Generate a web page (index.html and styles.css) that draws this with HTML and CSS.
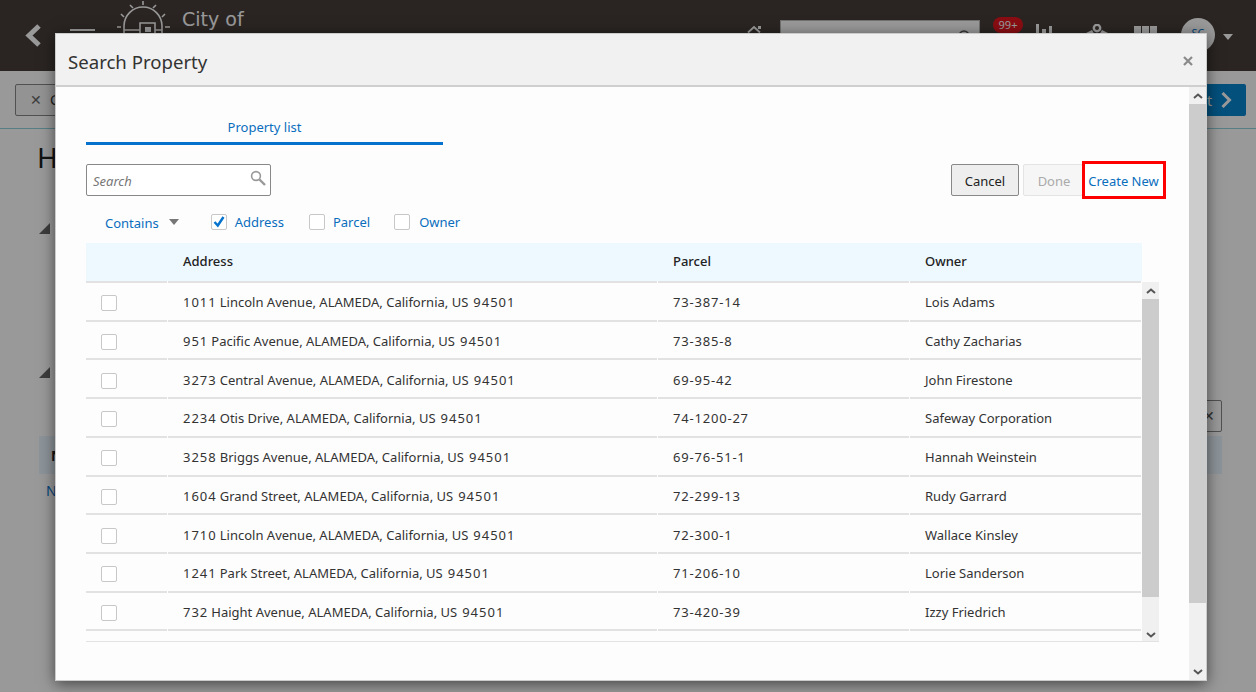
FILE: index.html
```html
<!DOCTYPE html>
<html lang="en">
<head>
<meta charset="utf-8">
<title>Search Property</title>
<link rel="stylesheet" href="styles.css">
</head>
<body>
<div class="page">
  <header class="topbar">
    <svg class="back" viewBox="0 0 18 24" width="18" height="24"><path d="M15 2 5 11.500l10 9.500" fill="none" stroke="#fff" stroke-width="5"/></svg>
    <div class="burger"></div>
    <svg class="logo" viewBox="0 0 56 40" width="56" height="40"><g fill="none" stroke="#fff" stroke-width="1.6"><path d="M8 36V26a19 19 0 0 1 38 0v10"/><path d="M27 1v4M14 5l3 3M40 5l-3 3M5 14l3 3M49 14l-3 3M1 27h4M49 27h5"/><path d="M8 30h16M39 30h7M24 33V23h15v10"/></g><rect x="29" y="27" width="6" height="5" fill="#fff"/></svg>
    <div class="cityname">City of</div>
    <div class="spacer"></div>
    <svg class="homeicon" viewBox="0 0 16 10" width="16" height="10"><path d="M1 7.500 7 2l6 5.500M3 8v2" fill="none" stroke="#fff" stroke-width="1.800"/><rect x="11" y="1" width="3" height="3" fill="#fff"/></svg>
    <div class="globalsearch"><svg viewBox="0 0 14 14" width="14" height="14"><circle cx="7" cy="7" r="5" fill="none" stroke="#555" stroke-width="1.500"/></svg></div>
    <div class="badge">99+</div>
    <svg class="chart" viewBox="0 0 16 20" width="16" height="20"><path d="M0 0h3v20H0zM6 5h4v15H6zM13 2h3v18h-3z" fill="#fff"/></svg>
    <svg class="people" viewBox="0 0 22 20" width="22" height="20"><circle cx="11" cy="4" r="3.200" fill="none" stroke="#fff" stroke-width="2.400"/><path d="M0 9 6 6l3 5h4l3-5 6 3v11H0z" fill="#fff"/></svg>
    <div class="apps"><i></i><i></i><i></i></div>
    <div class="avatar">SC</div>
    <div class="avatarcaret"></div>
  </header>
  <div class="trainbar">
    <div class="exitbtn"><span class="x">✕</span>Cancel</div>
    <div class="nextbtn">Next<svg viewBox="0 0 12 16" width="12" height="16"><path d="M2.500 1 9.500 8l-7 7" fill="none" stroke="#fff" stroke-width="3"/></svg></div>
  </div>
  <main class="content">
    <h1 class="pagehead">Home</h1>
    <div class="tri tri-one"></div>
    <div class="tri tri-two"></div>
    <div class="closechip">✕</div>
    <div class="bgheader"><b>Name</b></div>
    <div class="bglink">No data</div>
  </main>
</div>
<div class="scrim"></div>

<section class="dialog">
  <div class="dialog-head">
    <h2 class="dialog-title">Search Property</h2>
    <svg class="dialog-close" viewBox="0 0 10 10" width="10" height="10"><path d="M1 1l8 8M9 1 1 9" stroke="#8a8a8a" stroke-width="2.200"/></svg>
  </div>
  <div class="dialog-main">
    <div class="dialog-body">
      <div class="tab">Property list</div>
      <div class="tools">
        <div class="searchbox">
          <span>Search</span>
          <svg viewBox="0 0 16 16" width="16" height="16"><circle cx="6" cy="6" r="4.400" fill="none" stroke="#999" stroke-width="1.600"/><path d="M9.500 9.500 15 15" stroke="#999" stroke-width="2.400"/></svg>
        </div>
        <div class="actions">
          <button class="btn btn-cancel">Cancel</button>
          <button class="btn btn-done">Done</button>
          <a class="createnew">Create New</a>
        </div>
      </div>
      <div class="filters">
        <span class="contains">Contains</span><span class="caret"></span>
        <label class="opt opt-address"><span class="cb cb-on"><svg viewBox="0 0 16 16" width="16" height="16"><path d="M3.500 8 6.800 11.500 12.500 3" fill="none" stroke="#0572ce" stroke-width="2.400"/></svg></span>Address</label>
        <label class="opt opt-parcel"><span class="cb"></span>Parcel</label>
        <label class="opt opt-owner"><span class="cb"></span>Owner</label>
      </div>
      <div class="thead row">
        <div></div><div>Address</div><div>Parcel</div><div>Owner</div>
      </div>
      <div class="tablewrap">
        <div class="tbody">
          <div class="row"><div class="check"><span class="cb"></span></div><div><span class="n">1011</span> Lincoln Avenue, ALAMEDA, California, US <span class="n">94501</span></div><div class="parcel">73-387-14</div><div>Lois Adams</div></div>
          <div class="row"><div class="check"><span class="cb"></span></div><div><span class="n">951</span> Pacific Avenue, ALAMEDA, California, US <span class="n">94501</span></div><div class="parcel">73-385-8</div><div>Cathy Zacharias</div></div>
          <div class="row"><div class="check"><span class="cb"></span></div><div><span class="n">3273</span> Central Avenue, ALAMEDA, California, US <span class="n">94501</span></div><div class="parcel">69-95-42</div><div>John Firestone</div></div>
          <div class="row"><div class="check"><span class="cb"></span></div><div><span class="n">2234</span> Otis Drive, ALAMEDA, California, US <span class="n">94501</span></div><div class="parcel">74-1200-27</div><div>Safeway Corporation</div></div>
          <div class="row"><div class="check"><span class="cb"></span></div><div><span class="n">3258</span> Briggs Avenue, ALAMEDA, California, US <span class="n">94501</span></div><div class="parcel">69-76-51-1</div><div>Hannah Weinstein</div></div>
          <div class="row"><div class="check"><span class="cb"></span></div><div><span class="n">1604</span> Grand Street, ALAMEDA, California, US <span class="n">94501</span></div><div class="parcel">72-299-13</div><div>Rudy Garrard</div></div>
          <div class="row"><div class="check"><span class="cb"></span></div><div><span class="n">1710</span> Lincoln Avenue, ALAMEDA, California, US <span class="n">94501</span></div><div class="parcel">72-300-1</div><div>Wallace Kinsley</div></div>
          <div class="row"><div class="check"><span class="cb"></span></div><div><span class="n">1241</span> Park Street, ALAMEDA, California, US <span class="n">94501</span></div><div class="parcel">71-206-10</div><div>Lorie Sanderson</div></div>
          <div class="row"><div class="check"><span class="cb"></span></div><div><span class="n">732</span> Haight Avenue, ALAMEDA, California, US <span class="n">94501</span></div><div class="parcel">73-420-39</div><div>Izzy Friedrich</div></div>
        </div>
        <div class="sbar sbar-inner">
          <div class="sb-btn"><svg viewBox="0 0 10 6" width="10" height="6"><path d="M1 5 5 1.500 9 5" fill="none" stroke="#555" stroke-width="2"/></svg></div>
          <div class="sb-thumb"></div>
          <div class="sb-rest"><svg viewBox="0 0 10 6" width="10" height="6"><path d="M1 1 5 4.500 9 1" fill="none" stroke="#555" stroke-width="2"/></svg></div>
        </div>
      </div>
    </div>
    <div class="sbar sbar-outer">
      <div class="sb-btn"><svg viewBox="0 0 10 6" width="10" height="6"><path d="M1 5 5 1.500 9 5" fill="none" stroke="#555" stroke-width="2"/></svg></div>
      <div class="sb-thumb"></div>
      <div class="sb-rest"><svg viewBox="0 0 10 6" width="10" height="6"><path d="M1 1 5 4.500 9 1" fill="none" stroke="#555" stroke-width="2"/></svg></div>
    </div>
  </div>
</section>
</body>
</html>
```
FILE: styles.css
```css
* { box-sizing: border-box; }
html, body { margin: 0; height: 100%; overflow: hidden; }
body { font-family: "Noto Sans", "Open Sans", sans-serif; font-size: 14px; color: #333; background: #fff; }

.page { height: 692px; display: flex; flex-direction: column; }
.topbar { height: 71px; flex: none; background: #463e39; display: flex; align-items: flex-start; color: #fff; overflow: hidden; }
.back { margin: 24px 0 0 24px; flex: none; }
.burger { width: 25px; height: 2px; background: #fff; margin: 29px 0 0 28px; flex: none; }
.logo { margin: 0 0 0 21px; flex: none; }
.cityname { font-family: "DejaVu Sans", sans-serif; font-size: 19px; line-height: 24px; margin: 7px 0 0 10px; }
.spacer { flex: 1; }
.homeicon { margin: 25px 0 0 0; flex: none; }
.globalsearch { width: 200px; height: 30px; background: #fff; border: 1px solid #bbb; margin: 20px 0 0 17px; display: flex; justify-content: flex-end; padding: 8px 8px 0 0; }
.badge { width: 30px; height: 16px; border-radius: 8px; background: #e4171f; font-size: 11px; line-height: 16px; text-align: center; margin: 17px 0 0 13px; }
.chart { margin: 24px 0 0 13px; flex: none; }
.people { margin: 24px 0 0 34px; flex: none; }
.apps { display: flex; gap: 1px; margin: 26px 0 0 26px; }
.apps i { width: 7px; height: 7px; background: #fff; }
.avatar { width: 34px; height: 34px; border-radius: 50%; background: #fff; color: #0572ce; font-size: 11px; text-align: center; line-height: 30px; margin: 18px 0 0 24px; }
.avatarcaret { width: 0; height: 0; border: 5px solid transparent; border-top: 6px solid #fff; border-bottom: 0; margin: 34px 23px 0 8px; }

.trainbar { height: 58px; flex: none; display: flex; justify-content: space-between; align-items: flex-start; padding: 13px 10px 0 15px; border-bottom: 1px solid #8fd2dc; }
.exitbtn { width: 110px; height: 32px; border: 1px solid #888; border-radius: 2px; background: #f5f5f5; line-height: 30px; padding-left: 14px; }
.x { color: #666; margin-right: 8px; }
.nextbtn { width: 90px; height: 32px; border-radius: 2px; background: #0685cf; color: #fff; display: flex; align-items: center; justify-content: flex-end; gap: 8px; padding-right: 14px; }

.content { flex: 1; position: relative; padding: 10px 37px; }
.pagehead { font-size: 28px; font-weight: 400; margin: 0; line-height: 36px; color: #222; }
.tri { position: absolute; left: 39px; width: 0; height: 0; border-left: 11px solid transparent; border-bottom: 11px solid #666; }
.tri-one { top: 94px; }
.tri-two { top: 238px; }
.closechip { position: absolute; left: 1100px; top: 271px; width: 122px; height: 32px; border: 1px solid #888; border-radius: 2px; text-align: right; padding: 5px 6px; color: #555; }
.bgheader { position: absolute; left: 39px; top: 307px; width: 1183px; height: 38px; background: #ebf7ff; padding: 10px 12px; color: #222; }
.bglink { position: absolute; left: 46px; top: 352px; color: #0572ce; }

.scrim { position: absolute; inset: 0; background: rgba(0, 0, 0, .4); }

.dialog { position: absolute; left: 55px; top: 33px; width: 1152px; height: 648px; background: #fdfdfd; border: 1px solid #ccc; box-shadow: 0 3px 14px rgba(0, 0, 0, .55); display: flex; flex-direction: column; }
.dialog-head { height: 53px; flex: none; background: #f1f1f1; border-bottom: 2px solid #cfcfcf; display: flex; align-items: center; justify-content: space-between; padding: 3px 13px 0 12px; }
.dialog-title { margin: 0; font-size: 18.600px; font-weight: 400; color: #333; }
.dialog-main { flex: 1; display: flex; min-height: 0; }
.dialog-body { flex: 1; padding: 27px 0 0 30px; }

.tab { width: 357px; height: 31px; border-bottom: 3px solid #0572ce; color: #0a6ebd; font-size: 13px; text-align: center; line-height: 26px; }

.tools { display: flex; justify-content: space-between; align-items: flex-start; margin-top: 19px; width: 1080px; }
.searchbox { width: 185px; height: 32px; border: 1px solid #888; border-radius: 2px; background: #fff; display: flex; align-items: center; justify-content: space-between; padding: 1px 4px 0 6px; font-size: 13px; font-style: italic; color: #777; }
.searchbox svg { margin-top: -5px; }
.actions { display: flex; align-items: center; margin-top: -3px; }
.btn { height: 32px; font: inherit; font-size: 13px; border-radius: 2px; padding: 1px 0 0; }
.btn-cancel { width: 68px; background: #eee; border: 1px solid #888; color: #222; }
.btn-done { width: 60px; margin-left: 4px; margin-right: -1px; padding-left: 2px; background: #f6f6f6; border: 1px solid #e4e4e4; color: #aaa; }
.createnew { width: 84px; height: 38px; border: 3px solid #f00; color: #0a6ebd; font-size: 13px; line-height: 34px; text-align: center; white-space: nowrap; background: #fff; position: relative; padding-right: 1px; }

.filters { height: 44px; display: flex; align-items: center; position: relative; font-size: 13px; color: #0a6ebd; padding: 1px 0 0 19px; }
.contains { line-height: 18px; padding-top: 2px; }
.caret { width: 0; height: 0; border: 5px solid transparent; border-top: 6px solid #777; border-bottom: 0; margin-left: 10px; }
.opt { display: flex; align-items: center; gap: 8px; }
.opt-address { margin-left: 32px; }
.opt-parcel { margin-left: 25px; }
.opt-owner { margin-left: 24px; gap: 9px; }

.cb { display: block; width: 16px; height: 16px; border: 1px solid #c8c8c8; border-radius: 2px; background: #fff; flex: none; }
.cb svg { display: block; margin: -1px; }

.row { display: grid; grid-template-columns: 82px 490px 252px 232px; width: 1056px; }
.thead { background: #edf8ff; height: 38px; font-size: 13px; font-weight: 500; color: #222; }
.thead > div { padding-left: 15px; line-height: 36px; }

.tablewrap { width: 1073px; height: 361px; display: flex; border-bottom: 1px solid #e3e3e3; }
.tbody { width: 1056px; overflow: hidden; }
.tbody .row { height: 38.72px; font-size: 13px; color: #333; }
.tbody .row:first-child { height: 40.700px; padding-top: 1.700px; }
.tbody .row > div { display: flex; gap: 3px; align-items: center; padding: 2px 0 0 15px; margin-right: 1px; border-bottom: 2px solid #e2e2e2; white-space: nowrap; }
.tbody .row > .check { padding-top: 4px; }
.tbody .row:first-child > div { border-top: 2px solid #e2e2e2; margin-top: -1.700px; }
.n { letter-spacing: 1px; }
.n:last-child { margin-left: 2px; }
.parcel { letter-spacing: .8px; }

.sbar { width: 17px; flex: none; display: flex; flex-direction: column; background: #f0f0f0; }
.sbar-inner { margin-top: 1px; }
.sb-btn { height: 17px; flex: none; display: flex; align-items: center; justify-content: center; }
.sb-thumb { background: #ccc; }
.sb-rest { flex: 1; display: flex; align-items: flex-end; justify-content: center; padding-bottom: 5px; }
.sbar-inner .sb-thumb { height: 298px; }
.sbar-inner .sb-rest { padding-bottom: 3px; }
.sbar-outer .sb-thumb { height: 499px; }
```
